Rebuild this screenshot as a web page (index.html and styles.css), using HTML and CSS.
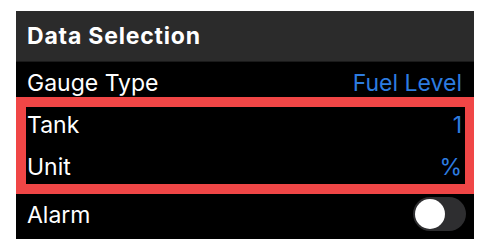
FILE: index.html
```html
<!DOCTYPE html>
<html lang="en">
<head>
    <meta charset="UTF-8">
    <meta name="viewport" content="width=device-width, initial-scale=1.0">
    <title>Data Selection</title>
    <link rel="stylesheet" href="styles.css">
</head>
<body>

    <div class="panel">
        <div class="panel-header">Data Selection</div>

        <div class="row row-gauge">
            <span class="label">Gauge Type</span>
            <span class="value">Fuel Level</span>
        </div>

        <!-- highlighted rows -->
        <div class="highlight">
            <div class="row row-tank">
                <span class="label">Tank</span>
                <span class="value">1</span>
            </div>
            <div class="row row-unit">
                <span class="label">Unit</span>
                <span class="value">%</span>
            </div>
        </div>

        <div class="row row-alarm">
            <span class="label">Alarm</span>
            <div class="toggle"><div class="knob"></div></div>
        </div>
    </div>

</body>
</html>
```

FILE: styles.css
```css
body {
    margin: 0;
    background-color: #fff;
    font-family: 'Inter', 'Liberation Sans', sans-serif;
}

.panel {
    width: 458px;
    margin: 11px 0 0 16px;
    background-color: #000;
    color: #fff;
}

.panel-header {
    height: 51px;
    padding: 12px 0 0 11px;
    box-sizing: border-box;
    background-color: #2b2b2b;
    border-bottom: 1px solid #1a1a1a;
    font-size: 23px;
    font-weight: 700;
    line-height: 26px;
    letter-spacing: 0.8px;
}

.row {
    display: flex;
    justify-content: space-between;
    align-items: flex-start;
    box-sizing: border-box;
    font-size: 23px;
    line-height: 26px;
}

.row-gauge {
    height: 35px;
    padding: 8px 12px 0 11px;
}

.value {
    color: #2d7ce0;
}

.highlight {
    border-style: solid;
    border-color: #f04646;
    border-width: 10px 9px 10px 10px;
}

.row-tank {
    height: 41.5px;
    padding: 5px 3px 0 1px;
}

.row-unit {
    height: 35.5px;
    padding: 5px 3px 0 1px;
}

.row-alarm {
    height: 45px;
    padding: 8px 8px 0 11px;
}

.toggle {
    width: 53px;
    height: 34px;
    margin-top: -5px;
    border-radius: 17px;
    background-color: #2e2e30;
    padding: 2px;
    box-sizing: border-box;
}

.knob {
    width: 30px;
    height: 30px;
    border-radius: 50%;
    background-color: #fff;
}
```
